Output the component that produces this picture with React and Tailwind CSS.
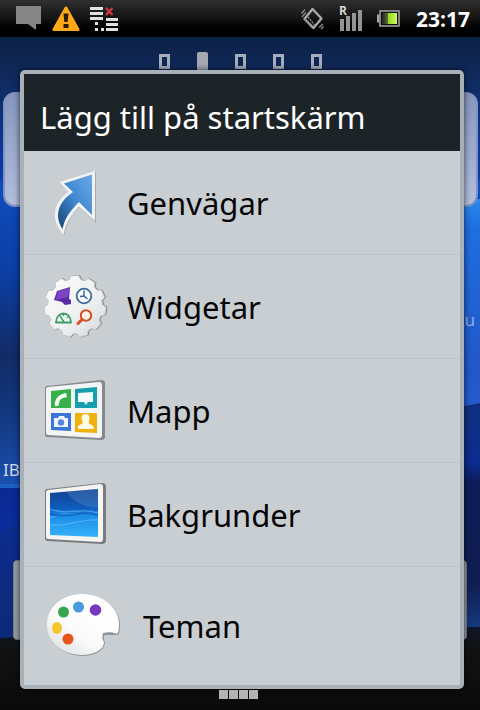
import React from 'react'

function Wallpaper() {
  return (
    <svg className="absolute inset-0 h-full w-full" viewBox="0 0 480 710" preserveAspectRatio="none" aria-hidden="true">
      <defs>
        <linearGradient id="sky" x1="0" y1="0" x2="0" y2="1">
          <stop offset="0.05" stopColor="#0d2145" />
          <stop offset="0.11" stopColor="#102a5e" />
          <stop offset="0.2" stopColor="#0d3594" />
          <stop offset="0.25" stopColor="#0b3ca6" />
          <stop offset="0.26" stopColor="#0f4dbd" />
          <stop offset="0.38" stopColor="#0b3fa6" />
          <stop offset="0.5" stopColor="#122b66" />
          <stop offset="0.58" stopColor="#12377e" />
          <stop offset="0.68" stopColor="#1a4fae" />
        </linearGradient>
        <linearGradient id="glow" x1="0" y1="0" x2="0" y2="1">
          <stop offset="0" stopColor="#2b87ee" />
          <stop offset="0.1" stopColor="#1f6fe0" />
          <stop offset="0.6" stopColor="#2257c8" />
          <stop offset="1" stopColor="#2a63d2" />
        </linearGradient>
        <linearGradient id="deepLeft" x1="0" y1="0" x2="0" y2="1">
          <stop offset="0" stopColor="#0a2a92" />
          <stop offset="0.25" stopColor="#0a2c9c" />
          <stop offset="0.65" stopColor="#10276a" />
          <stop offset="1" stopColor="#0a1a48" />
        </linearGradient>
        <linearGradient id="deepRight" x1="0" y1="0" x2="0" y2="1">
          <stop offset="0" stopColor="#10307e" />
          <stop offset="0.25" stopColor="#0d2c90" />
          <stop offset="0.33" stopColor="#0d1c58" />
          <stop offset="0.75" stopColor="#101d52" />
          <stop offset="1" stopColor="#164391" />
        </linearGradient>
        <linearGradient id="floor" x1="0" y1="0" x2="0" y2="1">
          <stop offset="0" stopColor="#101626" />
          <stop offset="0.3" stopColor="#121212" />
          <stop offset="1" stopColor="#0a0a0a" />
        </linearGradient>
      </defs>
      <rect width="480" height="710" fill="url(#sky)" />
      <path d="M240 199h240v213l-240 70z" fill="url(#glow)" />
      <path d="M0 486h240v180H0z" fill="url(#deepLeft)" />
      <path d="M0 484h30v4H0z" fill="#1b62c4" />
      <path d="M0 532c10-6 20-10 40-15v130H0z" fill="#0d2c86" opacity=".7" />
      <path d="M240 450l240-47v240H240z" fill="url(#deepRight)" />
      <path d="M0 638L240 627h240v83H0z" fill="url(#floor)" />
    </svg>
  )
}

function StatusBar() {
  return (
    <header className="relative flex h-[37px] items-center bg-linear-to-b from-[#303030] via-[#141414] to-black pr-[10px] pl-4">
      <svg className="mr-[11px] h-7 w-[25px]" viewBox="0 0 25 28" fill="#858585" aria-hidden="true">
        <path d="M0 1h25v18h-5v6l-8-6H0z" />
      </svg>
      <svg className="mr-[10px] h-7 w-7" viewBox="0 0 28 28" aria-hidden="true">
        <path d="M14 3L26 24.500H2z" fill="#ffa916" stroke="#ffa916" strokeWidth="3" strokeLinejoin="round" />
        <path d="M11.500 8.500h5l-.8 8.500h-3.400zM11.500 19h5v4h-5z" fill="#2b1c00" />
      </svg>
      <svg className="h-7 w-7" viewBox="0 0 28 28" aria-hidden="true">
        <path
          d="M0 2h13v3H0zM0 7h13v3H0zM0 12h13v3H0zM16 13h12v3H16zM16 18h12v3H16zM16 23h12v3H16zM5 17h3v3H5zM5 23h3v3H5zM11 23h3v3h-3z"
          fill="#e0e0e0"
        />
        <path d="M16 3l6.500 7M22.500 3L16 10" stroke="#d8343c" strokeWidth="2.200" />
      </svg>

      <svg className="mr-[15px] ml-auto h-7 w-[23px]" viewBox="0 0 23 28" fill="none" aria-hidden="true">
        <path d="M11.500 4l9 9.500-8 9.500-9-9z" stroke="#a9a9a9" strokeWidth="2.400" strokeLinejoin="round" />
        <path d="M3.500 14l8 9.500M7 12l6.500 8" stroke="#8a8a8a" strokeWidth="1.500" strokeDasharray="2 1" />
        <path d="M.5 8.500l3.500-4M1 12l4-4.500M18 22.500l4-3.500M20 24l2.500-2.500" stroke="#8a8a8a" strokeWidth="1.500" />
      </svg>
      <div className="relative mr-[14px] h-7 w-6">
        <svg className="h-full w-full" viewBox="0 0 24 28" fill="#949494" aria-hidden="true">
          <path d="M1 14h4v12H1zM7 11h4v15H7zM13 8h4v18h-4zM19 5h4v21h-4z" />
        </svg>
        <span className="absolute top-0 left-0 font-['Open_Sans',sans-serif] text-[12px] leading-[12px] font-bold text-[#d5d5d5]">R</span>
      </div>
      <svg className="mr-[16px] h-7 w-[23px]" viewBox="0 0 23 28" aria-hidden="true">
        <defs>
          <linearGradient id="charge" x1="0" y1="0" x2="1" y2="0">
            <stop offset="0" stopColor="#222" />
            <stop offset="0.38" stopColor="#5b6a30" />
            <stop offset="0.4" stopColor="#8fdc14" />
            <stop offset="1" stopColor="#d2f56c" />
          </linearGradient>
        </defs>
        <path d="M3 6h19v15H3z" fill="#111" stroke="#a4a4a4" strokeWidth="1.500" />
        <path d="M0 9.500h2.500v8H0z" fill="#a4a4a4" />
        <path d="M5 8h15v11H5z" fill="url(#charge)" />
      </svg>
      <time className="font-['Open_Sans','Noto_Sans',sans-serif] text-[21px] leading-7 font-bold text-white">23:17</time>
    </header>
  )
}

function ShortcutIcon() {
  return (
    <svg className="h-[72px] w-[72px]" viewBox="0 0 72 72" aria-hidden="true">
      <defs>
        <linearGradient id="arrow" x1="0" y1="1" x2="1" y2="0">
          <stop offset="0" stopColor="#174472" />
          <stop offset="0.5" stopColor="#3f87cf" />
          <stop offset="1" stopColor="#6aa9ea" />
        </linearGradient>
      </defs>
      <path d="M57 5L22 15l8.500 10C19 35 11 49 25 69c3-12 7-22 15.500-29L57 56z" fill="#8e9396" opacity=".6" />
      <path d="M56 4L20.500 15l9 10C15 36 10 50 24.500 68 27 55 33 47 40 39.500L56 54z" fill="#f1f2f3" />
      <path d="M53 7.500L25 16.500l9 8.500C19 35 15 49 23.500 62 26 50 32 43 40 35l13 13z" fill="url(#arrow)" />
    </svg>
  )
}

// outline of a cog with rounded teeth, centred on cx/cy
function cogPath(cx, cy, inner, outer, teeth) {
  const pts = []
  for (let i = 0; i < teeth; i++) {
    [[-0.36, inner], [-0.22, outer], [0.22, outer], [0.36, inner]].forEach(([o, r]) => {
      const a = ((i + o) / teeth) * Math.PI * 2
      pts.push(`${(cx + r * Math.sin(a)).toFixed(1)} ${(cy - r * Math.cos(a)).toFixed(1)}`)
    })
  }
  return `M${pts.join('L')}z`
}

function WidgetIcon() {
  const cog = cogPath(36, 35.5, 27.5, 31, 11)
  return (
    <svg className="h-[72px] w-[72px]" viewBox="0 0 72 72" aria-hidden="true">
      <defs>
        <linearGradient id="gear" x1="0" y1="0" x2="1" y2="1">
          <stop offset="0" stopColor="#fdfdfd" />
          <stop offset="0.6" stopColor="#eeeff0" />
          <stop offset="1" stopColor="#d2d5d7" />
        </linearGradient>
      </defs>
      <path d={cog} fill="#84898c" stroke="#84898c" strokeWidth="1" strokeLinejoin="round" transform="translate(1 0)" />
      <path d={cog} fill="url(#gear)" stroke="#c4c8ca" strokeWidth="1" strokeLinejoin="round" />
      <path d="M18 20l13-4-1 12 2 1v4l-6 1-3-3-8-2z" fill="#5a2aa3" />
      <path d="M19 20l11-3-1 9-12 3z" fill="#7d45c4" />
      <circle cx="45" cy="25" r="7.300" fill="#f7f9fc" stroke="#3c699e" strokeWidth="1.800" />
      <path d="M45 19.500V25l-4 .5M45 25l3.500 3" fill="none" stroke="#3c699e" strokeWidth="1.500" />
      <path d="M17 51.500c0-12 15-12 15 0z" fill="#eef6f1" stroke="#3c9a64" strokeWidth="1.800" strokeLinejoin="round" />
      <path d="M21 45l4 6M24.500 43v2M29 46l-1 1" fill="none" stroke="#3c9a64" strokeWidth="1.500" />
      <circle cx="47" cy="44.500" r="5.200" fill="#fbf1ed" stroke="#d64d22" strokeWidth="2" />
      <path d="M43 48.500l-4 4" stroke="#d64d22" strokeWidth="3" strokeLinecap="round" />
    </svg>
  )
}

function FolderIcon() {
  return (
    <svg className="h-[72px] w-[72px]" viewBox="0 0 72 72" aria-hidden="true">
      <path d="M6 13Q6 11 8 11L62 5Q66 5 66 8V62Q66 65 62 65L8 62Q6 62 6 59z" fill="#84898c" />
      <path d="M7 14Q7 12 9 12L60 7Q63 7 63 10V60Q63 63 60 63L9 60Q7 60 7 57z" fill="#f3f4f4" />
      <path d="M12 16l20-2v19H12z" fill="#37b04a" />
      <path d="M36 14l22-2v21H36z" fill="#159eae" />
      <path d="M12 38h20v18l-20-1z" fill="#3c74d8" />
      <path d="M36 38h22v20l-22-1z" fill="#f1b10d" />
      <path d="M16 31c-1-7 4-12 11-13l1 4-4 1c-3 1-4 3-4 6l-1 2z" fill="#f4fff4" />
      <path d="M39 18l15-1v10h-5l-2 3-2-3h-6z" fill="#f2fcfd" />
      <path d="M15 43h4l1-2h5l1 2h3v9H15z" fill="#f0f5ff" />
      <circle cx="22" cy="47.500" r="3.200" fill="#5685dd" />
      <path d="M46.500 39c3 0 4 2 4 4 0 3-1 4-1 5l5 3v3H39v-3l5-3c0-1-1.500-3-1.500-5 0-2 1-4 4-4z" fill="#fff9e8" />
    </svg>
  )
}

function WallpaperIcon() {
  return (
    <svg className="h-[72px] w-[72px]" viewBox="0 0 72 72" aria-hidden="true">
      <defs>
        <linearGradient id="screen" x1="0" y1="0" x2="0" y2="1">
          <stop offset="0" stopColor="#124291" />
          <stop offset="0.4" stopColor="#0f5cbd" />
          <stop offset="0.55" stopColor="#1b8de8" />
          <stop offset="1" stopColor="#35b1fa" />
        </linearGradient>
      </defs>
      <path d="M6 12Q6 10 8 10L63 4Q67 4 67 8V61Q67 65 63 65L9 62Q6 62 6 59z" fill="#777b7d" />
      <path d="M7 13Q7 11 9 11L61 5Q64 5 64 8V60Q64 63 61 63L9 60Q7 60 7 57z" fill="#f4f4f3" />
      <path d="M11 14l48-4v48l-48-2z" fill="url(#screen)" />
      <path d="M27 12.500l32-2.500v19c-13 0-24-6-32-16.500z" fill="#5c8cc6" opacity=".35" />
      <path d="M11 30c17 7 31-2 48 4M11 39c17-8 33 0 48-6M11 46c18 2 32-7 48-5" fill="none" stroke="#6fc6ff" strokeWidth="1.300" opacity=".5" />
      <path d="M11 35c16 5 32-4 48 1" fill="none" stroke="#0a4fae" strokeWidth="2" opacity=".6" />
    </svg>
  )
}

function ThemeIcon() {
  return (
    <svg className="h-[72px] w-[88px]" viewBox="0 0 88 72" aria-hidden="true">
      <defs>
        <linearGradient id="palette" x1="0" y1="1" x2="0.7" y2="0.2">
          <stop offset="0" stopColor="#d6d9db" />
          <stop offset="0.5" stopColor="#fafafa" />
          <stop offset="1" stopColor="#fff" />
        </linearGradient>
      </defs>
      <path d="M9 37C8 19 24 5 44 5c21 0 37 14 37 30 0 6-1 9-2 10H66c-2 2-1 4 0 8-1 8-12 13-22 13C26 66 10 55 9 37z" fill="#8f9497" />
      <path d="M8 36C7 18 23 4 43 4c21 0 37 14 37 30 0 6-1 9-2 10-4-2-9-2-14-1-1 4-1 6 1 9 0 8-11 13-22 13C25 65 9 54 8 36z" fill="url(#palette)" />
      <circle cx="24.500" cy="22" r="5.500" fill="#38a650" />
      <circle cx="39.500" cy="17" r="5.500" fill="#479adc" />
      <circle cx="56.500" cy="20" r="5.800" fill="#7738c0" />
      <ellipse cx="18" cy="38" rx="5" ry="6" fill="#f6c52b" />
      <circle cx="29" cy="49" r="5.500" fill="#e8521b" />
    </svg>
  )
}

const items = [
  { label: 'Genvägar', icon: ShortcutIcon },
  { label: 'Widgetar', icon: WidgetIcon },
  { label: 'Mapp', icon: FolderIcon },
  { label: 'Bakgrunder', icon: WallpaperIcon },
  { label: 'Teman', icon: ThemeIcon },
]

function AddDialog() {
  return (
    <section
      role="dialog"
      aria-labelledby="dialog-title"
      className="relative mr-4 ml-5 rounded-[5px] border-4 border-[#a9b1b8] bg-[#c9ced2] shadow-[0_0_6px_rgba(0,0,0,0.7)]"
    >
      <h1
        id="dialog-title"
        className="flex h-[77px] items-center bg-[#1d2427] pt-2 pl-4 text-[31px] leading-10 text-white"
      >
        Lägg till på startskärm
      </h1>
      <ul className="divide-y divide-[#bdc3c6]">
        {items.map(({ label, icon: Icon }) => (
          <li key={label}>
            <button className="flex h-[103px] w-full items-center gap-4 pl-[15px] text-left text-[31px] leading-10 text-[#050505] in-[li:last-child]:h-[118px]">
              <Icon />
              {label}
            </button>
          </li>
        ))}
      </ul>
    </section>
  )
}

export default function App() {
  return (
    <main className="relative min-h-screen overflow-hidden bg-black font-['Noto_Sans','Open_Sans',sans-serif]">
      <Wallpaper />

      {/* Home screen widgets behind the dialog */}
      <div className="absolute top-[92px] right-[2px] left-[3px] h-[115px] rounded-[12px] border-2 border-[#7f93be] bg-linear-to-b from-[#8796bf] to-[#b3bfdc]" />
      <div className="absolute top-[560px] right-[13px] left-[13px] h-[80px] rounded-[4px] border border-[#777b80] bg-[#989ca2]" />
      <span className="absolute top-[458px] left-[3px] text-[17px] leading-6 text-[#d3dcea]">IB</span>
      <span className="absolute top-[308px] right-[5px] text-[17px] leading-6 text-[#90aee0]">ku</span>

      <StatusBar />

      {/* Page indicator */}
      <div className="relative flex h-[33px] items-end justify-center gap-[27px]">
        <i className="mb-px h-[15px] w-[11px] border-3 border-[#a5adbd]" />
        <i className="h-[18px] w-[11px] rounded-t-[2px] bg-[#a5a9b4]" />
        <i className="mb-px h-[15px] w-[11px] border-3 border-[#a5adbd]" />
        <i className="mb-px h-[15px] w-[11px] border-3 border-[#a5adbd]" />
        <i className="mb-px h-[15px] w-[11px] border-3 border-[#a5adbd]" />
      </div>

      <AddDialog />

      {/* Drawer handle */}
      <div className="relative flex h-[21px] justify-center gap-px pt-px pr-[3px]">
        <i className="h-[9px] w-[9px] bg-[#b4b4b4]" />
        <i className="h-[9px] w-[9px] bg-[#b4b4b4]" />
        <i className="h-[9px] w-[9px] bg-[#b4b4b4]" />
        <i className="h-[9px] w-[9px] bg-[#b4b4b4]" />
      </div>
    </main>
  )
}
